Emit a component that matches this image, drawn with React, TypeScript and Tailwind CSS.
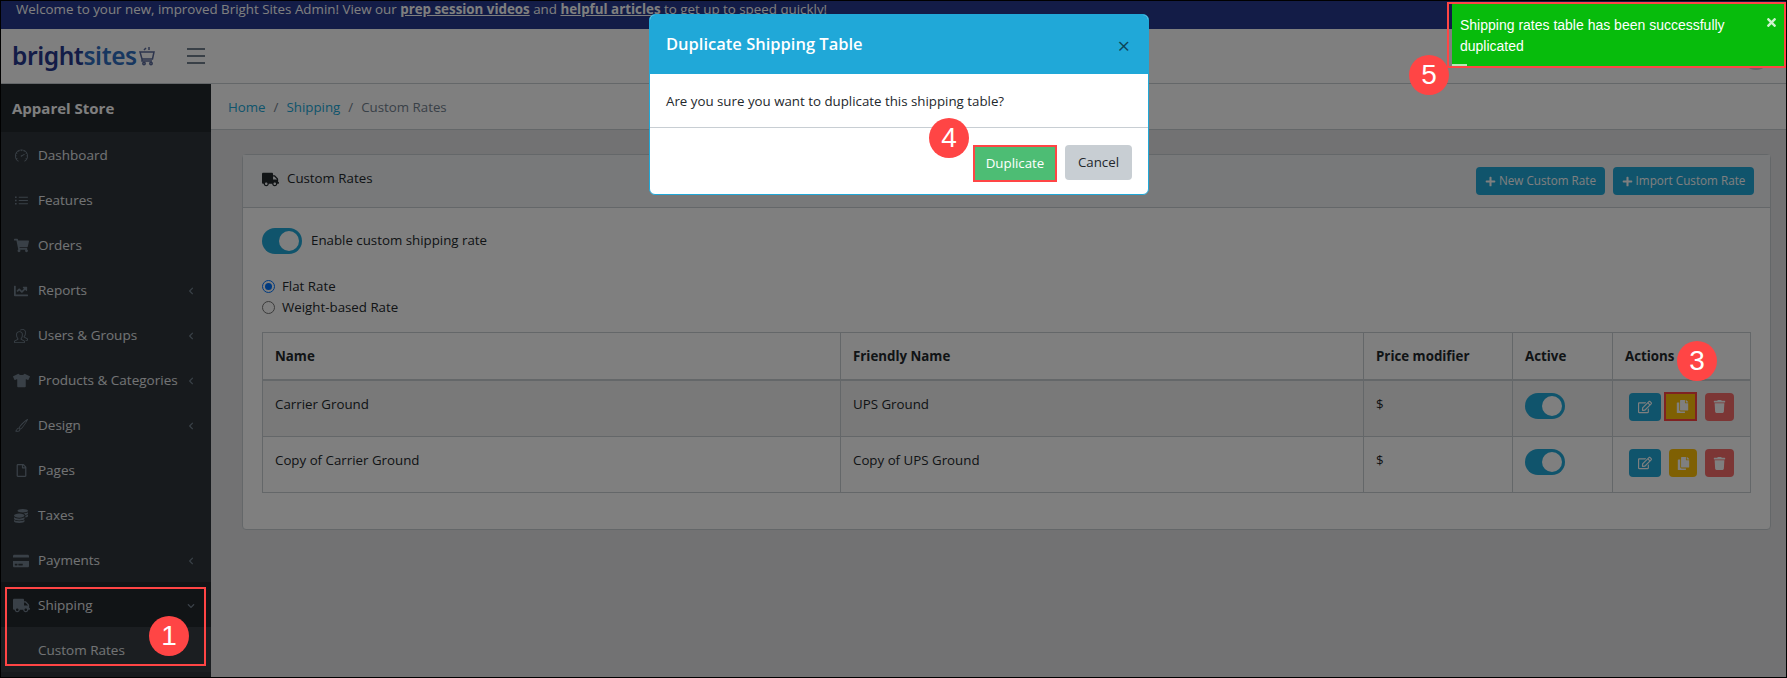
import React from 'react';
import { FaTruck, FaShoppingCart, FaTshirt, FaRegFile, FaCoins, FaCreditCard, FaRegEdit, FaCopy, FaTrash, FaPlus, FaChevronLeft, FaChevronDown, FaChartLine, FaTimes } from 'react-icons/fa';
import { SlSpeedometer, SlList, SlPeople } from 'react-icons/sl';
import { BsBrush } from 'react-icons/bs';

const navItems = [
  { label: 'Dashboard', icon: <SlSpeedometer size={13} /> },
  { label: 'Features', icon: <SlList size={13} /> },
  { label: 'Orders', icon: <FaShoppingCart size={15} /> },
  { label: 'Reports', icon: <FaChartLine size={14} />, arrow: true },
  { label: 'Users & Groups', icon: <SlPeople size={14} />, arrow: true },
  { label: 'Products & Categories', icon: <FaTshirt size={17} />, arrow: true },
  { label: 'Design', icon: <BsBrush size={13} />, arrow: true },
  { label: 'Pages', icon: <FaRegFile size={13} /> },
  { label: 'Taxes', icon: <FaCoins size={14} /> },
  { label: 'Payments', icon: <FaCreditCard size={16} />, arrow: true },
];

const Marker = ({ n, className }: { n: number; className: string }) => (
  <div className={`absolute z-30 flex h-10 w-10 items-center justify-center rounded-full bg-[#ff4545] font-['Liberation_Sans',sans-serif] text-[28px] text-white ${className}`}>
    {n}
  </div>
);

const Toggle = () => (
  <span className="flex h-[26px] w-10 items-center justify-end rounded-full bg-[#20a8d8] pr-[3px]">
    <span className="h-5 w-5 rounded-full bg-white" />
  </span>
);

const Row = ({ name, friendly, active }: { name: string; friendly: string; active?: boolean }) => (
  <tr className={`align-top text-[#23282c] ${active ? 'h-[57px] bg-black/5' : 'h-[56px]'}`}>
    <td className="border border-[#c8ced3] px-3 pt-[14px]">{name}</td>
    <td className="border border-[#c8ced3] px-3 pt-[14px]">{friendly}</td>
    <td className="border border-[#c8ced3] px-3 pt-[14px]">$</td>
    <td className="border border-[#c8ced3] px-3 pt-[12px]"><Toggle /></td>
    <td className="border border-[#c8ced3] pl-4 pt-[12px]">
      <div className="flex gap-2">
        <span className="flex h-7 w-8 items-center justify-center rounded bg-[#20a8d8] text-white"><FaRegEdit size={14} /></span>
        {active ? (
          <span className="-ml-[5px] -mt-px flex h-[29px] w-[33px] items-center justify-center border-2 border-[#ff4545] bg-[#ffc107] pl-[3px] text-white"><FaCopy size={13} /></span>
        ) : (
          <span className="flex h-7 w-7 items-center justify-center rounded bg-[#ffc107] text-white"><FaCopy size={13} /></span>
        )}
        <span className="flex h-7 w-[29px] items-center justify-center rounded bg-[#f86c6b] text-white"><FaTrash size={13} /></span>
      </div>
    </td>
  </tr>
);

export default function App() {
  return (
    <div className="relative h-[678px] w-[1787px] overflow-hidden border border-black bg-white font-['Open_Sans','Noto_Sans',sans-serif] text-[13.3px]">
      <div className="h-[28px] bg-[#26388e] pl-[15px] text-[13.35px] leading-[16px] text-white">
        Welcome to your new, improved Bright Sites Admin! View our <b className="underline">prep session videos</b> and <b className="underline">helpful articles</b> to get up to speed quickly!
      </div>

      <header className="flex h-[55px] items-center border-b border-[#c8ced3] bg-white pl-[11px]">
        <div className="flex w-[145px] items-center font-['Noto_Sans',sans-serif] text-[24.5px] font-semibold leading-none tracking-[-0.4px]">
          <span className="text-[#26388e]">bright</span>
          <span className="text-[#2f6fc0]">sites</span>
          <svg className="ml-[2px]" width="16" height="20" viewBox="0 0 16 20" fill="none" stroke="#5a6a9a" strokeWidth="1.5">
            <path d="M1 6h14l-1.5 7H3L1 6zM3 13v2h10M5 4l2-2M10 4V1" />
            <circle cx="5" cy="17.5" r="1.2" />
            <circle cx="12" cy="17.5" r="1.2" />
          </svg>
        </div>
        <div className="ml-[30px] flex w-[18px] flex-col gap-[5px]">
          <span className="h-[2px] bg-[#73818f]" />
          <span className="h-[2px] bg-[#73818f]" />
          <span className="h-[2px] bg-[#73818f]" />
        </div>
        <span className="ml-auto mr-[16px] h-[28px] w-[28px] rounded-full bg-[#c8ced3]" />
      </header>

      <div className="flex h-[593px]">
        <aside className="flex w-[210px] shrink-0 flex-col bg-[#2f353a] text-[13.5px] text-[#e4e7ea]">
          <div className="flex h-[48px] shrink-0 items-center bg-[#23282c] pl-[11px] text-[15px] font-bold text-white">Apparel Store</div>
          {navItems.map((item) => (
            <div key={item.label} className="flex h-[45px] shrink-0 items-center pl-[10px] pr-[16px] pt-[2px]">
              <span className="flex w-5 justify-center text-[#73818f]">{item.icon}</span>
              <span className="ml-[7px]">{item.label}</span>
              {item.arrow && <FaChevronLeft size={8} className="ml-auto text-[#73818f]" />}
            </div>
          ))}
          <div className="flex h-[45px] shrink-0 items-center bg-[#23282c] pl-[10px] pr-[16px] pt-[2px]">
            <span className="flex w-5 justify-center text-[#73818f]"><FaTruck size={17} /></span>
            <span className="ml-[7px]">Shipping</span>
            <FaChevronDown size={8} className="ml-auto text-[#73818f]" />
          </div>
          <div className="flex h-[45px] shrink-0 items-center bg-[#363d43] pl-[37px] pt-[2px]">Custom Rates</div>
        </aside>

        <main className="flex-1 bg-[#e4e5e6]">
          <nav className="flex h-[46px] items-center gap-2 border-b border-[#c8ced3] bg-white pl-[17px] pt-[2px]">
            <span className="text-[#20a8d8]">Home</span>
            <span className="text-[#73818f]">/</span>
            <span className="text-[#20a8d8]">Shipping</span>
            <span className="text-[#73818f]">/</span>
            <span className="text-[#73818f]">Custom Rates</span>
          </nav>

          <section className="ml-[31px] mr-[15px] mt-[24px] h-[376px] rounded border border-[#c8ced3] bg-white">
            <div className="flex h-[53px] items-center border-b border-[#c8ced3] bg-[#f0f3f5] pl-[19px] pr-[16px] text-[#23282c]">
              <div className="-mt-1 flex items-center">
                <FaTruck size={17} />
                <span className="ml-[8px]">Custom Rates</span>
              </div>
              <div className="ml-auto flex gap-2 text-[11.7px] text-white">
                <span className="flex h-[28px] w-[129px] items-center justify-center gap-[3px] rounded-sm bg-[#20a8d8]"><FaPlus size={11} />New Custom Rate</span>
                <span className="flex h-[28px] w-[141px] items-center justify-center gap-[3px] rounded-sm bg-[#20a8d8]"><FaPlus size={11} />Import Custom Rate</span>
              </div>
            </div>
            <div className="px-[19px] pt-[20px] text-[#23282c]">
              <div className="flex items-center gap-[9px]">
                <Toggle />
                <span>Enable custom shipping rate</span>
              </div>
              <div className="mt-[22px] flex items-center gap-[7px] leading-[21px]">
                <span className="flex h-[13px] w-[13px] items-center justify-center rounded-full border border-[#0075ff]"><span className="h-[7px] w-[7px] rounded-full bg-[#0075ff]" /></span>
                Flat Rate
              </div>
              <div className="flex items-center gap-[7px] leading-[21px]">
                <span className="h-[13px] w-[13px] rounded-full border border-[#767676]" />
                Weight-based Rate
              </div>
              <table className="mt-[14px] w-[1488px] table-fixed border-collapse">
                <colgroup>
                  <col className="w-[578px]" />
                  <col className="w-[523px]" />
                  <col className="w-[149px]" />
                  <col className="w-[100px]" />
                  <col className="w-[138px]" />
                </colgroup>
                <thead>
                  <tr className="h-[47px] text-left text-[#23282c]">
                    <th className="border border-b-2 border-[#c8ced3] px-3 pt-[2px] font-bold">Name</th>
                    <th className="border border-b-2 border-[#c8ced3] px-3 pt-[2px] font-bold">Friendly Name</th>
                    <th className="border border-b-2 border-[#c8ced3] px-3 pt-[2px] font-bold">Price modifier</th>
                    <th className="border border-b-2 border-[#c8ced3] px-3 pt-[2px] font-bold">Active</th>
                    <th className="border border-b-2 border-[#c8ced3] px-3 pt-[2px] font-bold">Actions</th>
                  </tr>
                </thead>
                <tbody>
                  <Row name="Carrier Ground" friendly="UPS Ground" active />
                  <Row name="Copy of Carrier Ground" friendly="Copy of UPS Ground" />
                </tbody>
              </table>
            </div>
          </section>
        </main>
      </div>

      {/* backdrop */}
      <div className="absolute inset-0 z-10 bg-black/50" />

      {/* modal */}
      <div className="absolute left-[648px] top-[13px] z-20 h-[181px] w-[500px] overflow-hidden rounded-md border border-[#20a8d8] bg-white text-[#23282c]">
        <div className="flex h-[59px] items-center justify-between bg-[#20a8d8] pl-4 pr-[18px] text-white">
          <span className="text-[16.5px] font-semibold">Duplicate Shipping Table</span>
          <span className="text-[22px] font-normal leading-none text-black/60">×</span>
        </div>
        <div className="flex h-[54px] items-center border-b border-[#c8ced3] pl-4 pt-[2px]">Are you sure you want to duplicate this shipping table?</div>
        <div className="flex items-start justify-end gap-2 pr-[16px] pt-[17px]">
          <span className="flex h-[37px] w-[84px] items-center justify-center border-2 border-[#ff4545] bg-[#4dbd74] text-white">Duplicate</span>
          <span className="flex h-[35px] w-[67px] items-center justify-center rounded bg-[#c8ced3]">Cancel</span>
        </div>
      </div>

      {/* toast */}
      <div className="absolute left-[1446px] top-[1px] z-20 h-[66px] w-[339px] border-2 border-[#ff4545] pl-[3px] font-['Liberation_Sans',sans-serif] text-[14px] leading-[21px] text-white">
        <div className="relative h-full bg-[#07bc0c] pl-[8px] pt-[11px]">
          <div className="w-[280px]">Shipping rates table has been successfully duplicated</div>
          <FaTimes size={13} className="absolute right-[6px] top-[12px] text-white/80" />
          <span className="absolute bottom-0 left-0 h-[2px] w-[15px] bg-white/70" />
        </div>
      </div>

      {/* annotations */}
      <div className="absolute left-[4px] top-[586px] z-30 h-[79px] w-[201px] border-2 border-[#ff4545]" />
      <Marker n={1} className="left-[148px] top-[615px]" />
      <Marker n={3} className="left-[1676px] top-[340px]" />
      <Marker n={4} className="left-[928px] top-[117px]" />
      <Marker n={5} className="left-[1408px] top-[54px]" />
    </div>
  );
}
